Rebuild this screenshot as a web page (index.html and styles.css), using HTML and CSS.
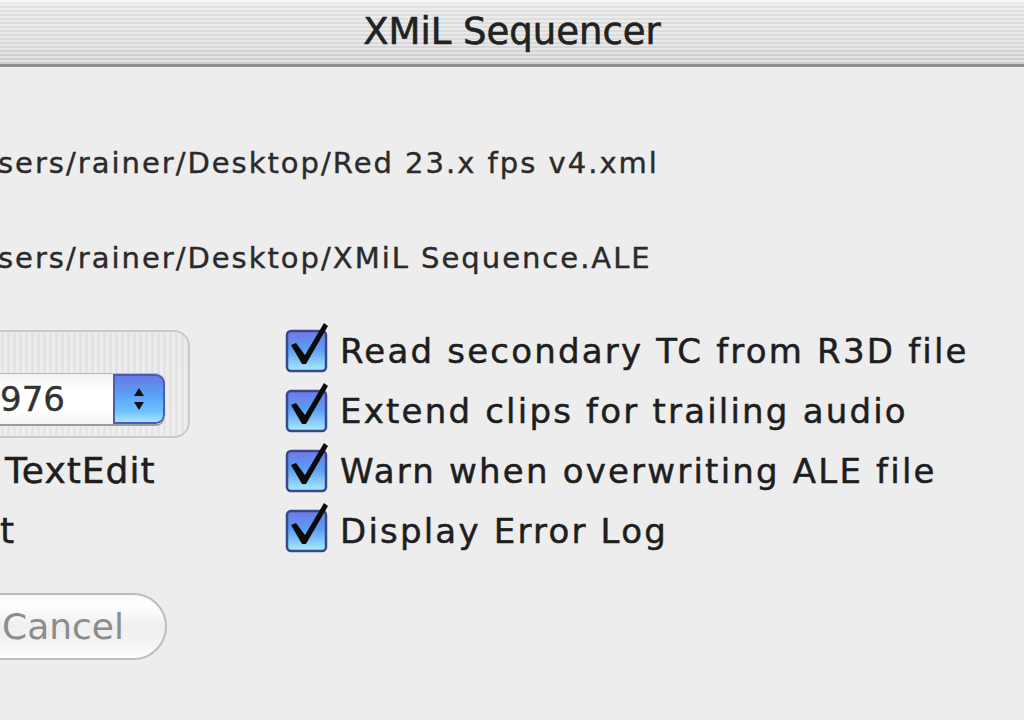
FILE: index.html
```html
<!DOCTYPE html>
<html lang="en">
<head>
<meta charset="utf-8">
<title>XMiL Sequencer</title>
<link rel="stylesheet" href="styles.css">
</head>
<body>
<div class="window">
  <header class="titlebar"><span class="title">XMiL Sequencer</span></header>
  <main class="content">
    <p class="path">sers/rainer/Desktop/Red 23.x fps v4.xml</p>
    <p class="path path-dst">sers/rainer/Desktop/XMiL Sequence.ALE</p>
    <div class="columns">
      <div class="left">
        <div class="groupbox">
          <div class="popup">
            <span class="popup-value">976</span>
            <span class="stepper">
              <svg width="20" height="30" viewBox="0 0 20 30"><path d="M10 4 L15 12 L5 12 Z M10 26 L15 18 L5 18 Z" fill="#111"/></svg>
            </span>
          </div>
        </div>
        <div class="opt-row opt-textedit">TextEdit</div>
        <div class="opt-row opt-cut">t</div>
        <button class="btn" type="button">Cancel</button>
      </div>
      <div class="right">
        <label class="check-row"><span class="checkbox"><svg width="46" height="52" viewBox="0 0 46 52"><defs><linearGradient id="cb1" x1="0" y1="0" x2="0" y2="1"><stop offset="0" stop-color="#7178e4"/><stop offset="0.45" stop-color="#5a9cf4"/><stop offset="1" stop-color="#a9ecff"/></linearGradient></defs><rect x="2" y="9" width="39" height="40" rx="4" fill="url(#cb1)" stroke="#38478a" stroke-width="2.5"/><path d="M6 23 L11 21 L20 33 L39 1 L43 4 L21 42 L17 42 Z" fill="#0a0a0a"/></svg></span><span class="check-label">Read secondary TC from R3D file</span></label>
        <label class="check-row"><span class="checkbox"><svg width="46" height="52" viewBox="0 0 46 52"><rect x="2" y="9" width="39" height="40" rx="4" fill="url(#cb1)" stroke="#38478a" stroke-width="2.5"/><path d="M6 23 L11 21 L20 33 L39 1 L43 4 L21 42 L17 42 Z" fill="#0a0a0a"/></svg></span><span class="check-label">Extend clips for trailing audio</span></label>
        <label class="check-row"><span class="checkbox"><svg width="46" height="52" viewBox="0 0 46 52"><rect x="2" y="9" width="39" height="40" rx="4" fill="url(#cb1)" stroke="#38478a" stroke-width="2.5"/><path d="M6 23 L11 21 L20 33 L39 1 L43 4 L21 42 L17 42 Z" fill="#0a0a0a"/></svg></span><span class="check-label">Warn when overwriting ALE file</span></label>
        <label class="check-row"><span class="checkbox"><svg width="46" height="52" viewBox="0 0 46 52"><rect x="2" y="9" width="39" height="40" rx="4" fill="url(#cb1)" stroke="#38478a" stroke-width="2.5"/><path d="M6 23 L11 21 L20 33 L39 1 L43 4 L21 42 L17 42 Z" fill="#0a0a0a"/></svg></span><span class="check-label">Display Error Log</span></label>
      </div>
    </div>
  </main>
</div>
</body>
</html>
```
FILE: styles.css
```css
html, body {
  margin: 0;
  padding: 0;
  width: 1024px;
  height: 720px;
  overflow: hidden;
  background: #ededed;
  font-family: "DejaVu Sans", "Liberation Sans", sans-serif;
  color: #1e1e1e;
}

.window {
  width: 1024px;
  height: 720px;
  background: #ededed;
}

.titlebar {
  height: 64px;
  display: flex;
  align-items: center;
  justify-content: center;
  background:
    repeating-linear-gradient(180deg, rgba(255,255,255,0.35) 0 2px, rgba(0,0,0,0.02) 2px 4px),
    linear-gradient(180deg, #f6f6f6 0, #e4e4e4 6px, #dedede 40px, #d2d2d2 62px);
  border-bottom: 3px solid #8f8f8f;
  box-shadow: 0 1px 0 #f4f4f4;
}

.title {
  font-size: 37px;
  color: #222;
  line-height: 1;
  padding-bottom: 2px;
  -webkit-text-stroke: 0.6px #222;
}

.content {
  padding-top: 76px;
}

.path {
  margin: 0 0 0 -2px;
  font-size: 29px;
  line-height: 40px;
  height: 40px;
  letter-spacing: 2px;
  color: #2a2a2a;
  white-space: nowrap;
  -webkit-text-stroke: 0.4px #2a2a2a;
}

.path-dst {
  margin-top: 55px;
}

.columns {
  display: flex;
  margin-top: 43px;
}

.left {
  margin-left: -40px;
  width: 230px;
  display: flex;
  flex-direction: column;
}

.groupbox {
  margin-top: 9px;
  height: 108px;
  box-sizing: border-box;
  border: 2px solid #c9c9c9;
  border-radius: 16px;
  padding: 42px 23px 0 20px;
  background:
    repeating-linear-gradient(90deg, rgba(255,255,255,0.25) 0 3px, rgba(0,0,0,0.015) 3px 6px),
    linear-gradient(180deg, #e6e6e6, #e9e9e9);
}

.popup {
  display: flex;
  height: 50px;
  border-radius: 0 9px 9px 0;
  box-shadow: 0 2px 0 #9c9c9c, 0 -1px 0 #b8b8b8;
  background: linear-gradient(180deg, #f2f2f2 0, #ffffff 30%, #ffffff 70%, #f4f4f4 100%);
  overflow: hidden;
}

.popup-value {
  flex: 1;
  padding-left: 18px;
  font-size: 34px;
  line-height: 50px;
  color: #333;
  -webkit-text-stroke: 0.4px #333;
}

.stepper {
  width: 52px;
  display: flex;
  align-items: center;
  justify-content: center;
  border-radius: 0 9px 9px 0;
  background: linear-gradient(180deg, #6a76e0 0, #5a9ef6 40%, #70c2ff 75%, #b4ecff 100%);
  box-shadow: inset 0 0 0 2px #4a5abd;
}

.opt-row {
  height: 60px;
  line-height: 60px;
  font-size: 36px;
  white-space: nowrap;
  color: #1e1e1e;
  -webkit-text-stroke: 0.5px #1e1e1e;
}

.opt-textedit {
  margin-top: 3px;
  padding-left: 45px;
  letter-spacing: 1px;
}

.opt-cut {
  padding-left: 40px;
}

.btn {
  margin-top: 32px;
  width: 207px;
  height: 67px;
  box-sizing: border-box;
  padding: 0 0 0 40px;
  text-align: left;
  border: 2px solid #bdbdbd;
  border-radius: 34px;
  background: linear-gradient(180deg, #f8f8f8 0, #ffffff 15%, #efefef 50%, #f4f4f4 80%, #ffffff 100%);
  font-family: "DejaVu Sans", sans-serif;
  font-size: 36px;
  color: #8c8c8c;
  line-height: 1;
}

.right {
  margin-left: 97px;
  display: flex;
  flex-direction: column;
}

.check-row {
  display: flex;
  align-items: center;
  height: 60px;
}

.checkbox {
  width: 46px;
  height: 52px;
  margin-left: -2px;
  margin-top: -6px;
  display: block;
}

.checkbox svg {
  display: block;
}

.check-label {
  margin-left: 9px;
  font-size: 34px;
  line-height: 60px;
  letter-spacing: 2.2px;
  white-space: nowrap;
  color: #1e1e1e;
  -webkit-text-stroke: 0.5px #1e1e1e;
}
```
